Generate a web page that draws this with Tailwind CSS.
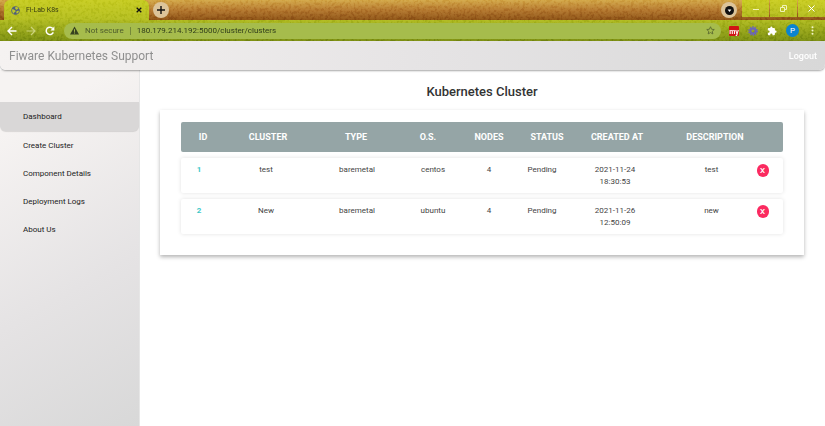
<!DOCTYPE html>
<html lang="en">
<head>
<meta charset="utf-8">
<title>Fi-Lab K8s</title>
<script src="https://cdn.jsdelivr.net/npm/@tailwindcss/browser@4"></script>
</head>
<body class="flex min-h-screen flex-col bg-white font-[Roboto,'Liberation_Sans',sans-serif] text-[8px] leading-3 text-[#333]">
<div class="relative isolate h-[41px] bg-[#8b5014]">
  <div class="flex h-5 items-stretch bg-linear-to-b from-[#d3a746] via-[#b3762c] to-[#8b5014]">
    <div class="ml-1 flex w-[145px] items-center gap-[6px] rounded-t-md bg-linear-to-b from-[#c6cb20] to-[#b3bd1f] pr-[6px] pl-[7px] text-[#3a3f12]">
      <svg class="relative z-10 size-[9px]" viewBox="0 0 18 18"><circle cx="9" cy="9" r="8.5" fill="#50607a"/><path d="M2 7c2-1 4 0 5 1s3 1 2 3-3 1-3 3-1 1-2 0-2-4-2-7zM9 2c2-1 5 1 6 3l-3 2c-1 1-2 0-3-1s-1-3 0-4zM12 10c2-1 4-1 4 0s-2 5-4 5-2-4 0-5z" fill="#bcc62c"/></svg>
      <span class="relative z-10 flex-1 text-[7px]">Fi-Lab K8s</span>
      <button aria-label="Close tab" class="relative z-10 size-[7px]"><svg class="size-[6px]" viewBox="0 0 6 6" stroke="#111" stroke-width="1.3"><path d="M.7.7l4.6 4.6M5.3.7L.7 5.3"/></svg></button>
    </div>
    <button aria-label="New tab" class="relative z-10 mt-[2px] ml-1 flex size-4 items-center justify-center rounded-full bg-[#dcc49a]"><svg class="size-2" viewBox="0 0 8 8" stroke="#111" stroke-width="1.4"><path d="M4 0v8M0 4h8"/></svg></button>
    <div class="flex-1"></div>
    <button aria-label="Search tabs" class="relative z-10 mt-[2px] mr-[5px] flex size-4 items-center justify-center rounded-full bg-[#dcc49a]"><svg class="size-[9px]" viewBox="0 0 9 9"><circle cx="4.500" cy="4.500" r="4.500" fill="#111"/><path d="M2.600 3.600h3.800L4.500 6z" fill="#fff"/></svg></button>
    <div class="flex h-[17px] gap-px">
      <button aria-label="Minimize" class="flex w-[27px] items-center justify-center bg-linear-to-b from-[#c9cc20] to-[#b3bb20]"><svg class="relative z-10 size-[6px]" viewBox="0 0 6 6" stroke="#f1f2b8"><path d="M0 3.500h6"/></svg></button>
      <button aria-label="Restore" class="flex w-[27px] items-center justify-center bg-linear-to-b from-[#c9cc20] to-[#b3bb20]"><svg class="relative z-10 size-[7px]" viewBox="0 0 7 7" fill="none" stroke="#f1f2b8"><path d="M.5 2.500h4v4h-4zM2.500 2.500v-2h4v4h-2"/></svg></button>
      <button aria-label="Close window" class="flex w-[27px] items-center justify-center bg-linear-to-b from-[#c9cc20] to-[#b3bb20]"><svg class="relative z-10 size-[7px]" viewBox="0 0 7 7" stroke="#fff"><path d="M.5.5l6 6M6.500.5l-6 6"/></svg></button>
    </div>
  </div>
  <div class="flex h-[21px] items-center bg-linear-to-b from-[#aeb91e] to-[#7b8e11] pr-2 pl-[7px]">
    <div class="relative z-10 flex w-[57px] gap-[9px]">
      <button aria-label="Back" class="size-[10px]"><svg viewBox="0 0 10 10" fill="none" stroke="#fff" stroke-width="1.4"><path d="M9.500 5H1.500M5 1L1 5l4 4"/></svg></button>
      <button aria-label="Forward" class="size-[10px]"><svg viewBox="0 0 10 10" fill="none" stroke="#cbd27c" stroke-width="1.200"><path d="M.5 5h8M5 1l4 4-4 4"/></svg></button>
      <button aria-label="Reload" class="size-[10px]"><svg viewBox="0 0 10 10"><path d="M8.300 6.400A3.700 3.700 0 1 1 7.800 2.500" fill="none" stroke="#fff" stroke-width="1.500"/><path d="M9.400.4v4H5.400z" fill="#fff"/></svg></button>
    </div>
    <div class="relative z-10 flex h-4 flex-1 items-center rounded-full bg-[#a6bc4c] px-[6px] text-[#2f3c1b]">
      <svg class="size-[9px]" viewBox="0 0 9 9"><path d="M4.500.5L9 8.500H0z" fill="#37421f"/><path d="M4.500 3.200v2.600M4.500 6.500v1" stroke="#a6bc4c"/></svg>
      <span class="ml-[6px] text-[#4e5d2c]">Not secure</span>
      <span class="mx-[6px] h-2 w-px bg-[#76893a]"></span>
      <input aria-label="Address" class="min-w-0 flex-1 bg-transparent outline-none" value="180.179.214.192:5000/cluster/clusters">
      <button aria-label="Bookmark this page" class="size-[9px]"><svg viewBox="0 0 18 18" fill="none" stroke="#5b6a30" stroke-width="1.800"><path d="M9 1.500l2.200 5 5.300.5-4 3.600 1.200 5.300L9 13.100l-4.700 2.800 1.200-5.300-4-3.600 5.300-.5z"/></svg></button>
    </div>
    <div class="relative z-10 ml-2 flex items-center gap-[9px]">
      <button aria-label="My extension" class="flex size-[10px] items-end justify-center rounded-[1px] bg-[#d01414] text-[7px] leading-[8px] font-bold text-white">my</button>
      <button aria-label="Gear extension" class="size-[10px]"><svg viewBox="0 0 10 10" fill="none" stroke="#6a63bd"><circle cx="5" cy="5" r="4" stroke-width="1.600" stroke-dasharray="1.500 1.010"/><circle cx="5" cy="5" r="2.500" stroke-width="1.800"/></svg></button>
      <button aria-label="Extensions" class="size-[10px]"><svg viewBox="0 0 24 24" fill="#fff"><path d="M20.500 11H19V7a2 2 0 0 0-2-2h-4V3.500a2.500 2.500 0 0 0-5 0V5H4a2 2 0 0 0-2 2v3.800h1.500a2.700 2.700 0 0 1 0 5.400H2V20a2 2 0 0 0 2 2h3.800v-1.500a2.700 2.700 0 0 1 5.400 0V22H17a2 2 0 0 0 2-2v-4h1.500a2.500 2.500 0 0 0 0-5z"/></svg></button>
      <button aria-label="Profile" class="size-[13px] rounded-full bg-[#0a84d0] text-[8px] leading-[13px] text-white">P</button>
      <button aria-label="Menu" class="size-[9px]"><svg viewBox="0 0 9 9" fill="#f3f5c8"><circle cx="4.500" cy="1.200" r="1"/><circle cx="4.500" cy="4.500" r="1"/><circle cx="4.500" cy="7.800" r="1"/></svg></button>
    </div>
  </div>
  <!-- leather-like grain of the browser theme -->
  <svg class="pointer-events-none absolute inset-0 z-0 size-full opacity-15 mix-blend-soft-light" aria-hidden="true"><filter id="grain"><feTurbulence type="fractalNoise" baseFrequency="0.35" numOctaves="2" seed="4"/><feColorMatrix type="matrix" values="4 0 0 0 -1.500  4 0 0 0 -1.500  4 0 0 0 -1.500  0 0 0 0 1"/></filter><rect width="100%" height="100%" filter="url(#grain)"/></svg>
</div>
<header class="z-10 flex h-[29px] items-center justify-between rounded-b-md bg-linear-to-r from-[#f5f2f1] via-[#e6e4e5] to-[#d8d8d8] pr-2 pl-[9px] shadow-[0_1px_2px_rgba(0,0,0,0.35)]">
  <span class="text-[12px] leading-4 text-[#8f8f8f]">Fiware Kubernetes Support</span>
  <a href="#" class="text-[9px] font-medium text-white">Logout</a>
</header>
<div class="flex flex-1">
  <nav class="w-[140px] shrink-0 border-r border-[#e6e6e6] bg-linear-[150deg] from-[#f6f3f2] from-15% via-[#e5e3e4] via-60% to-[#d8d8d8] pt-8 text-[#222]">
    <a href="#" class="mb-px flex h-[29px] items-center rounded-b-md bg-[#d9d7d7] pl-[23px] shadow-[0_1px_1px_rgba(0,0,0,0.12)]">Dashboard</a>
    <a href="#" class="flex h-[28px] items-center pl-[23px]">Create Cluster</a>
    <a href="#" class="flex h-[28px] items-center pl-[23px]">Component Details</a>
    <a href="#" class="flex h-[28px] items-center pl-[23px]">Deployment Logs</a>
    <a href="#" class="flex h-[28px] items-center pl-[23px]">About Us</a>
  </nav>
  <main class="flex-1 pt-[14px] pr-[21px] pl-5">
    <h1 class="text-center text-[13px] leading-4 font-medium text-[#333]">Kubernetes Cluster</h1>
    <section class="mt-[10px] px-[21px] pt-3 pb-[21px] shadow-[0_2px_4px_rgba(0,0,0,0.3)]">
      <table class="block w-full text-center">
        <thead class="block">
          <tr class="grid h-[30px] grid-cols-[44fr_86fr_90fr_54fr_68fr_48fr_92fr_104fr_16fr] items-center rounded-[2px] bg-[#95a5a6] text-[9px] font-bold whitespace-nowrap text-white">
            <th>ID</th><th>CLUSTER</th><th>TYPE</th><th>O.S.</th><th>NODES</th><th>STATUS</th><th>CREATED AT</th><th>DESCRIPTION</th><td></td>
          </tr>
        </thead>
        <tbody class="mt-[6px] flex flex-col gap-[6px] text-[#444]">
          <tr class="grid h-[35px] grid-cols-[36fr_98fr_84fr_68fr_44fr_62fr_84fr_85fr_41fr] items-start rounded-[2px] pt-[6px] shadow-[0_0_4px_rgba(0,0,0,0.12)]">
            <td><a href="#" class="font-bold text-[#3cc8c8]">1</a></td><td>test</td><td>baremetal</td><td>centos</td><td>4</td><td>Pending</td><td>2021-11-24<br>18:30:53</td><td class="pl-6">test</td>
            <td class="flex justify-center"><button aria-label="Delete cluster 1" class="h-[13px] w-3 rounded-full bg-[#fb2a60] leading-[13px] font-medium text-white">X</button></td>
          </tr>
          <tr class="grid h-[35px] grid-cols-[36fr_98fr_84fr_68fr_44fr_62fr_84fr_85fr_41fr] items-start rounded-[2px] pt-[6px] shadow-[0_0_4px_rgba(0,0,0,0.12)]">
            <td><a href="#" class="font-bold text-[#3cc8c8]">2</a></td><td>New</td><td>baremetal</td><td>ubuntu</td><td>4</td><td>Pending</td><td>2021-11-26<br>12:50:09</td><td class="pl-6">new</td>
            <td class="flex justify-center"><button aria-label="Delete cluster 2" class="h-[13px] w-3 rounded-full bg-[#fb2a60] leading-[13px] font-medium text-white">X</button></td>
          </tr>
        </tbody>
      </table>
    </section>
  </main>
</div>
</body>
</html>
